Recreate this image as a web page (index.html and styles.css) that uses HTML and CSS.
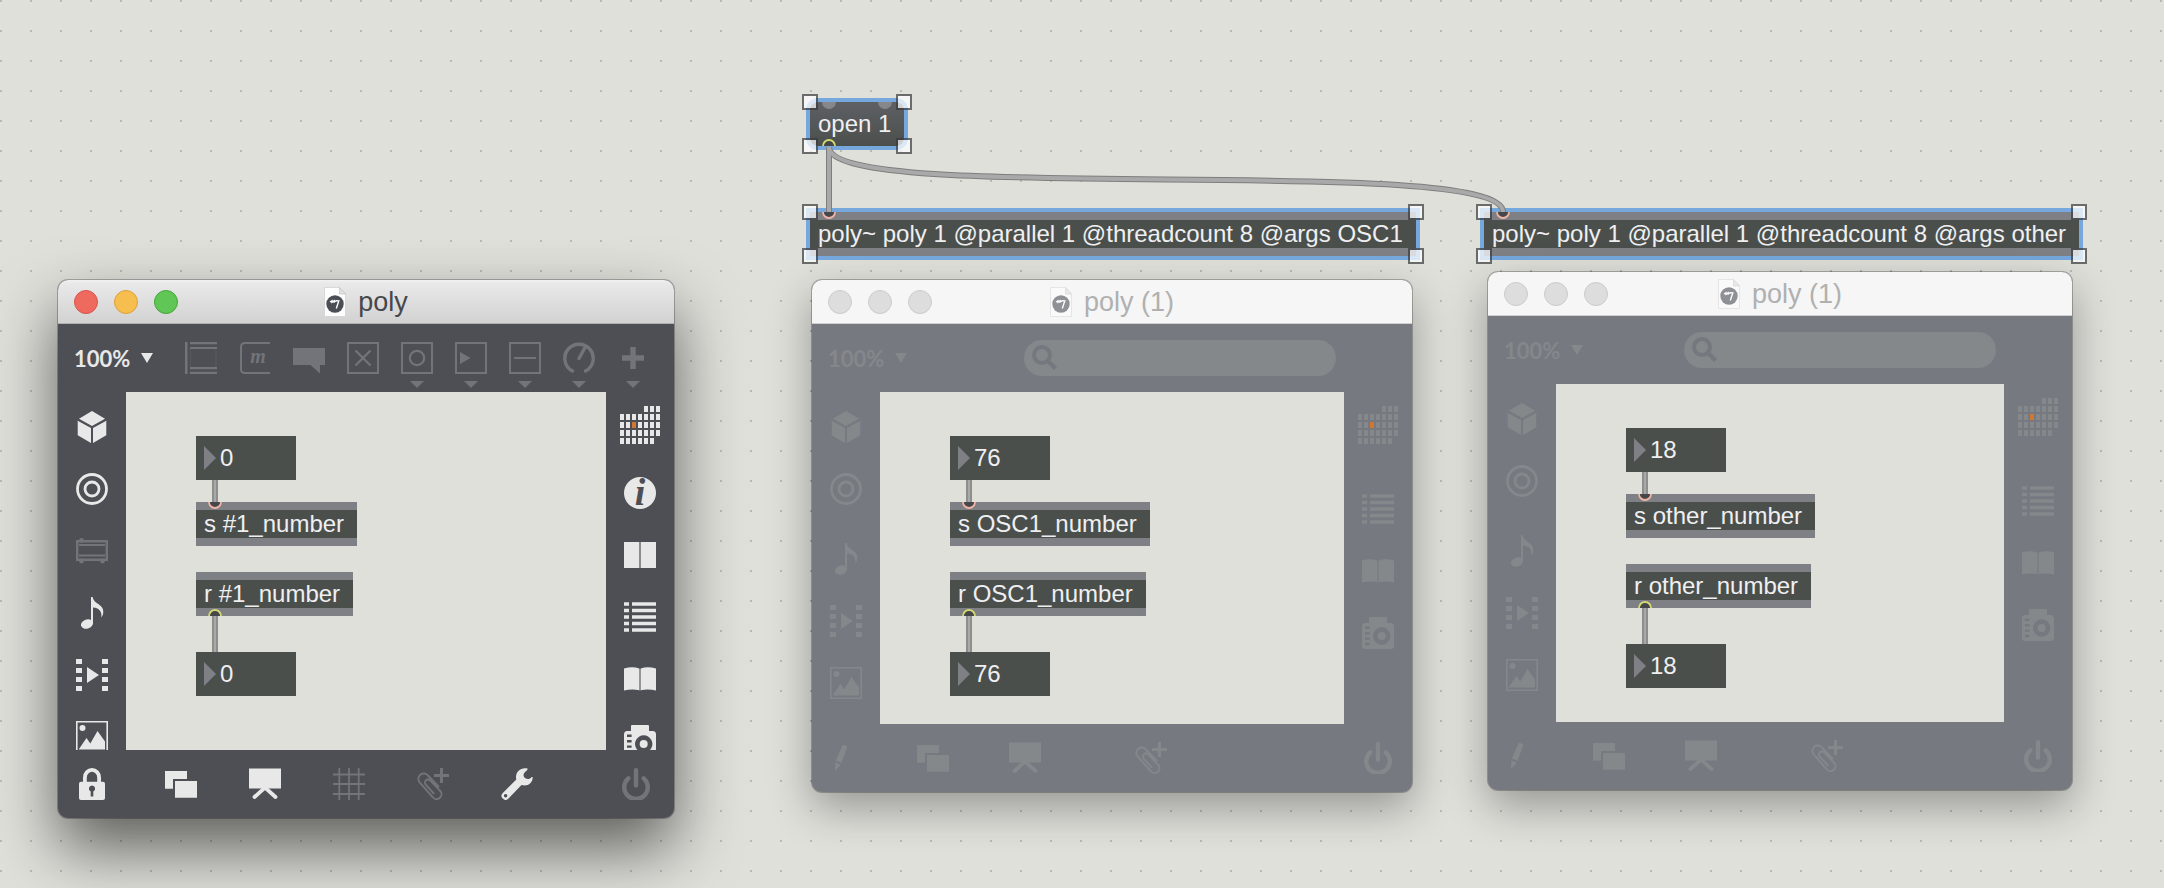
FILE: index.html
```html
<!DOCTYPE html>
<html lang="en">
<head>
<meta charset="utf-8">
<title>poly patcher</title>
<link rel="stylesheet" href="styles.css">
</head>
<body>
<svg class="sprite" aria-hidden="true">
  <symbol id="cube" viewBox="0 0 32 32"><path fill="currentColor" d="M16 0 29 7.7 16 15 3 7.7ZM1.7 9.7 15 17V32L1.7 24.3ZM17 17 30.3 9.7V24.3L17 32Z"/></symbol>
  <symbol id="target" viewBox="0 0 32 32"><g fill="none" stroke="currentColor" stroke-width="2.8"><circle cx="16" cy="16" r="14.5"/><circle cx="16" cy="16" r="7"/></g></symbol>
  <symbol id="rack" viewBox="0 0 32 32"><path fill="none" stroke="currentColor" stroke-width="2.4" d="M1.2 6.2H30.8V24.8H1.2Z"/><path stroke="currentColor" stroke-width="2" d="M3 10H29M3 20.5H29"/><g fill="currentColor"><circle cx="5.5" cy="5.4" r="2.4"/><circle cx="5.5" cy="26" r="2.4"/><circle cx="26.5" cy="26" r="2.4"/></g></symbol>
  <symbol id="note" viewBox="0 0 32 32"><g fill="currentColor"><path d="M15 0H16.6C17.5 7 27.3 7 27.3 14.5C27.3 17 26.5 19 25.3 20.5C26 15.5 24 11 17 10.6V27H15Z"/><ellipse cx="11" cy="27" rx="6.2" ry="4.6" transform="rotate(-20 11 27)"/></g></symbol>
  <symbol id="film" viewBox="0 0 32 32"><path fill="currentColor" d="M0 0h6v5H0zM0 9h6v5H0zM0 18h6v5H0zM0 27h6v5H0zM26 0h6v5h-6zM26 9h6v5h-6zM26 18h6v5h-6zM26 27h6v5h-6zM11 8 23 16 11 24Z"/></symbol>
  <symbol id="picture" viewBox="0 0 32 32"><path fill="none" stroke="currentColor" stroke-width="1.6" d="M.8.8H31.2V31.2H.8Z"/><g fill="currentColor"><circle cx="6.5" cy="7" r="3"/><path d="M3 28 10.5 17 14.3 22.5 21.5 10 29 20.5V28.5H3Z"/></g></symbol>
  <symbol id="lock" viewBox="0 0 32 32"><path fill="none" stroke="currentColor" stroke-width="3.8" d="M8.9 15V9.5a7.1 7.6 0 0 1 14.2 0V15"/><path fill="currentColor" fill-rule="evenodd" d="M5 13.7H27a2 2 0 0 1 2 2V30a2 2 0 0 1-2 2H5a2 2 0 0 1-2-2V15.7a2 2 0 0 1 2-2ZM16 17.4a3.2 3.2 0 0 0-1.3 6.1V28.5h2.6V23.5A3.2 3.2 0 0 0 16 17.4Z"/></symbol>
  <symbol id="copies" viewBox="0 0 32 32"><path fill="currentColor" d="M0 3H22V11H8V20.7H0ZM10 13H32V29.7H10Z"/></symbol>
  <symbol id="easel" viewBox="0 0 32 32"><path fill="currentColor" d="M0 .5H32V20.5H0Z"/><path fill="none" stroke="currentColor" stroke-width="3.8" stroke-linecap="round" d="M5.5 29 16 19.5 26.5 29"/></symbol>
  <symbol id="grid" viewBox="0 0 32 32"><path stroke="currentColor" stroke-width="1.8" d="M6.3 0V32M16 0V32M25.7 0V32M0 6.5H32M0 16H32M0 26H32"/></symbol>
  <symbol id="clip" viewBox="0 0 32 32"><path stroke="currentColor" stroke-width="3" d="M24.5 0V15M17 7.5H32"/><path fill="none" stroke="currentColor" stroke-width="1.9" stroke-linecap="round" d="M21.5 18.5 11 7.5A5.3 5.3 0 0 0 2.6 14.4L15.6 29A4.7 4.7 0 0 0 23.6 23.3L13.3 12.6A3 3 0 0 0 8.7 16.6L16.7 25.3"/></symbol>
  <symbol id="wrench" viewBox="0 0 32 32"><path fill="currentColor" fill-rule="evenodd" d="M26.5.6C20 -1.2 13.5 4 15.3 11.5L1.8 24.9A4 4 0 0 0 7.5 30.6L20.5 17C26.5 18.8 31.5 15.2 31.8 9.2L30.6 9C29 11.2 26.5 11.5 24.3 10.3 21.7 8.5 22.2 5.8 24.5 3.6 25.5 2.7 26.8 2.2 26.5.6ZM4.6 26a1.7 1.7 0 1 0 .01 0Z"/></symbol>
  <symbol id="power" viewBox="0 0 32 32"><path fill="none" stroke="currentColor" stroke-width="4.4" stroke-linecap="round" d="M16 2.2V17.5M8.3 10.3A11.8 11.8 0 1 0 23.7 10.3"/></symbol>
  <symbol id="pencil" viewBox="0 0 32 32"><path fill="currentColor" d="M17.5 3.6Q18 2.7 19 3L21.3 4Q22.4 4.5 22.1 5.5L16.5 20.8 10.8 18.5ZM10.4 20.5 15.7 22.8 10 29Z"/></symbol>
  <symbol id="object" viewBox="0 0 32 32"><path fill="currentColor" d="M0 0H2.5V32H0ZM5 0H32V2.2H5ZM5 5H32V7H5ZM5 25H32V27.2H5ZM5 29.8H32V32H5Z"/><path fill="none" stroke="currentColor" stroke-width=".6" opacity=".6" d="M5.3 7V25M31 7V25"/></symbol>
  <symbol id="comment" viewBox="0 0 32 32"><path fill="currentColor" d="M0 6H32V23H27V31.5L17.5 23H0Z"/></symbol>
  <symbol id="toggle" viewBox="0 0 32 32"><path fill="none" stroke="currentColor" stroke-width="2" d="M1 1H31V31H1Z"/><path stroke="currentColor" stroke-width="2.4" d="M8.5 8.5 23.5 23.5M23.5 8.5 8.5 23.5"/></symbol>
  <symbol id="button" viewBox="0 0 32 32"><path fill="none" stroke="currentColor" stroke-width="2" d="M1 1H31V31H1Z"/><circle cx="16" cy="16" r="7.2" fill="none" stroke="currentColor" stroke-width="2.2"/></symbol>
  <symbol id="number" viewBox="0 0 32 32"><path fill="none" stroke="currentColor" stroke-width="2" d="M1 1H31V31H1Z"/><path fill="currentColor" d="M5 10 15.5 16 5 22Z"/></symbol>
  <symbol id="slider" viewBox="0 0 32 32"><path fill="none" stroke="currentColor" stroke-width="2" d="M1 1H31V31H1Z"/><path stroke="currentColor" stroke-width="2.2" d="M5 16H27"/></symbol>
  <symbol id="dial" viewBox="0 0 32 32"><path fill="none" stroke="currentColor" stroke-width="3.4" stroke-linecap="round" d="M9.5 29A14.2 14.2 0 1 1 22.5 29M16 16.5 22 5.5"/></symbol>
  <symbol id="plus" viewBox="0 0 32 32"><path stroke="currentColor" stroke-width="5.4" d="M16 5V27M5 16H27"/></symbol>
  <symbol id="caret" viewBox="0 0 14 7"><path fill="currentColor" d="M0 0H14L7 7Z"/></symbol>
  <symbol id="zoom-caret" viewBox="0 0 12 10"><path fill="currentColor" d="M0 0H12L6 10Z"/></symbol>
  <symbol id="calendar" viewBox="0 0 40 38"><path fill="none" stroke="currentColor" stroke-width="6" stroke-dasharray="4 2" d="M24 3H40M0 11H40M0 19H40M0 27H40M0 35H34"/><path fill="#d07830" d="M12 16h4v6h-4z"/></symbol>
  <symbol id="panels" viewBox="0 0 32 32"><path fill="currentColor" d="M0 3H15V29H0ZM17 3H32V29H17Z"/><path fill="currentColor" opacity=".4" d="M15 3h2v26h-2z"/></symbol>
  <symbol id="list" viewBox="0 0 32 32"><path fill="none" stroke="currentColor" stroke-width="3.4" d="M0 3H5M8 3H32M0 9.5H5M8 9.5H32M0 16H5M8 16H32M0 22.5H5M8 22.5H32M0 29H5M8 29H32"/></symbol>
  <symbol id="book" viewBox="0 0 32 32"><path fill="currentColor" d="M0 5.6Q8 3.2 15.2 5.4V27.3Q8 25.6 0 27.6ZM16.8 5.4Q24 3.2 32 5.6V27.6Q24 25.6 16.8 27.3Z"/><path fill="currentColor" opacity=".4" d="M15.2 5.4h1.6v22h-1.6z"/></symbol>
  <symbol id="camera" viewBox="0 0 32 32"><path fill="currentColor" fill-rule="evenodd" d="M8 0H24Q25 0 25 1V6H29.5Q32 6.5 32 9V29Q32 32 29 32H3Q0 32 0 29V9Q0 6.5 2.5 6H7V1Q7 0 8 0ZM19.7 10.3a8.7 8.7 0 1 0 .01 0ZM3 9.6H7.6V12H3ZM3 15H7.6V17.4H3ZM3 20.4H7.6V22.8H3ZM3 25.8H7.6V28.2H3Z"/><circle cx="19.7" cy="19" r="4" fill="currentColor"/></symbol>
  <symbol id="search" viewBox="0 0 26 26"><circle cx="10" cy="10" r="8" fill="none" stroke="currentColor" stroke-width="4"/><path stroke="currentColor" stroke-width="4.5" d="M15.5 15.5 23.5 23.5"/></symbol>
  <symbol id="document" viewBox="0 0 22 30"><path fill="#fdfdfd" stroke="#d2d2d2" stroke-width=".8" d="M.5.5H15.5L21.5 7V29.5H.5Z"/><path fill="#e2e2e2" stroke="#bdbdbd" stroke-width=".6" d="M15.5.5V7H21.5Z"/><circle cx="11" cy="17" r="8.7" fill="#4b4e55"/><path fill="none" stroke="#fff" stroke-width="1.4" d="M6 15 8 13.8 8 15.2 10.2 13.8 10.2 15 12.3 13.6 14.8 13.8 12.3 21.5"/></symbol>
  <symbol id="inlet" viewBox="0 0 14 7"><path fill="#45474a" stroke="#f0b3a5" stroke-width="1.8" d="M1 -1V0A6 6 0 0 0 13 0V-1"/></symbol>
  <symbol id="outlet" viewBox="0 0 14 7"><path fill="#45474a" stroke="#d3d970" stroke-width="1.8" d="M1 8V7A6 6 0 0 1 13 7V8"/></symbol>
  <symbol id="message-inlet" viewBox="0 0 14 7"><path fill="#87878b" d="M0 0A7 7 0 0 0 14 0Z"/></symbol>
</svg>

<main class="desktop">
  <div class="node message-box selected at-open">open 1
    <svg class="port top"><use href="#message-inlet"/></svg>
    <svg class="port top second"><use href="#message-inlet"/></svg>
    <svg class="port bottom"><use href="#outlet"/></svg>
    <i class="handle nw"></i><i class="handle ne"></i><i class="handle sw"></i><i class="handle se"></i>
  </div>
  <div class="node object-box selected at-osc">poly~ poly 1 @parallel 1 @threadcount 8 @args OSC1
    <svg class="port top"><use href="#inlet"/></svg>
    <i class="handle nw"></i><i class="handle ne"></i><i class="handle sw"></i><i class="handle se"></i>
  </div>
  <div class="node object-box selected at-other">poly~ poly 1 @parallel 1 @threadcount 8 @args other
    <svg class="port top"><use href="#inlet"/></svg>
    <i class="handle nw"></i><i class="handle ne"></i><i class="handle sw"></i><i class="handle se"></i>
  </div>
  <svg class="cords" aria-hidden="true">
    <g class="cord-edge"><path d="M829 147V212"/><path d="M829 147C829 207 1503 152 1503 212"/></g>
    <g class="cord-core"><path d="M829 147V212"/><path d="M829 147C829 207 1503 152 1503 212"/></g>
  </svg>

  <section class="window active win-main">
    <header class="titlebar">
      <div class="lights"><button class="light close" aria-label="Close"></button><button class="light minimise" aria-label="Minimise"></button><button class="light expand" aria-label="Expand"></button></div>
      <h1 class="title"><svg class="doc"><use href="#document"/></svg>poly</h1>
    </header>
    <div class="toolbar">
      <label class="zoom"><select aria-label="Zoom"><option>100%</option></select><svg class="zoom-caret"><use href="#zoom-caret"/></svg></label>
      <div class="tools">
        <button class="tool" aria-label="Object"><svg class="icon"><use href="#object"/></svg></button>
        <button class="tool" aria-label="Message"><svg class="icon" viewBox="0 0 32 32"><path fill="none" stroke="currentColor" stroke-width="2" d="M31 1H6Q2 1 2 5V27Q2 31 6 31H31"/><text class="glyph-m" x="19" y="21">m</text></svg></button>
        <button class="tool" aria-label="Comment"><svg class="icon"><use href="#comment"/></svg></button>
        <button class="tool" aria-label="Toggle"><svg class="icon"><use href="#toggle"/></svg></button>
        <button class="tool" aria-label="Button"><svg class="icon"><use href="#button"/></svg><svg class="caret"><use href="#caret"/></svg></button>
        <button class="tool" aria-label="Number"><svg class="icon"><use href="#number"/></svg><svg class="caret"><use href="#caret"/></svg></button>
        <button class="tool" aria-label="Slider"><svg class="icon"><use href="#slider"/></svg><svg class="caret"><use href="#caret"/></svg></button>
        <button class="tool" aria-label="Dial"><svg class="icon"><use href="#dial"/></svg><svg class="caret"><use href="#caret"/></svg></button>
        <button class="tool" aria-label="Add"><svg class="icon"><use href="#plus"/></svg><svg class="caret"><use href="#caret"/></svg></button>
      </div>
    </div>
    <nav class="rail left">
      <button class="tool" aria-label="Packages"><svg class="icon"><use href="#cube"/></svg></button>
      <button class="tool" aria-label="Target"><svg class="icon"><use href="#target"/></svg></button>
      <button class="tool dim" aria-label="Rack"><svg class="icon"><use href="#rack"/></svg></button>
      <button class="tool" aria-label="Audio"><svg class="icon"><use href="#note"/></svg></button>
      <button class="tool" aria-label="Video"><svg class="icon"><use href="#film"/></svg></button>
      <button class="tool" aria-label="Images"><svg class="icon"><use href="#picture"/></svg></button>
    </nav>
    <div class="canvas">
      <label class="node number-box row-1"><input aria-label="Number in" value="0"></label>
      <div class="node object-box row-2">s #1_number<svg class="port top"><use href="#inlet"/></svg></div>
      <div class="node object-box row-3">r #1_number<svg class="port bottom"><use href="#outlet"/></svg></div>
      <label class="node number-box row-4"><input aria-label="Number out" value="0"></label>
      <i class="cord cord-1"></i><i class="cord cord-2"></i>
    </div>
    <nav class="rail right">
      <button class="tool" aria-label="Calendar"><svg class="icon-wide"><use href="#calendar"/></svg></button>
      <button class="tool" aria-label="Info"><svg class="icon" viewBox="0 0 32 32"><circle cx="16" cy="16" r="16" fill="currentColor"/><text class="glyph-i" x="16" y="28">i</text></svg></button>
      <button class="tool" aria-label="Panels"><svg class="icon"><use href="#panels"/></svg></button>
      <button class="tool" aria-label="List"><svg class="icon"><use href="#list"/></svg></button>
      <button class="tool" aria-label="Reference"><svg class="icon"><use href="#book"/></svg></button>
      <button class="tool" aria-label="Snapshots"><svg class="icon"><use href="#camera"/></svg></button>
    </nav>
    <footer class="bottombar">
      <button class="tool" aria-label="Lock"><svg class="icon"><use href="#lock"/></svg></button>
      <div class="actions">
        <button class="tool" aria-label="New view"><svg class="icon"><use href="#copies"/></svg></button>
        <button class="tool" aria-label="Presentation"><svg class="icon"><use href="#easel"/></svg></button>
        <button class="tool dim" aria-label="Grid"><svg class="icon"><use href="#grid"/></svg></button>
        <button class="tool dim" aria-label="Attach"><svg class="icon"><use href="#clip"/></svg></button>
        <button class="tool" aria-label="Settings"><svg class="icon"><use href="#wrench"/></svg></button>
      </div>
      <button class="tool dim power" aria-label="Power"><svg class="icon"><use href="#power"/></svg></button>
    </footer>
  </section>

  <section class="window inactive win-osc">
    <header class="titlebar">
      <div class="lights"><button class="light" aria-label="Close"></button><button class="light" aria-label="Minimise"></button><button class="light" aria-label="Expand"></button></div>
      <h1 class="title"><svg class="doc"><use href="#document"/></svg>poly (1)</h1>
    </header>
    <div class="toolbar">
      <label class="zoom"><select aria-label="Zoom"><option>100%</option></select><svg class="zoom-caret"><use href="#zoom-caret"/></svg></label>
      <label class="search"><svg class="search-icon"><use href="#search"/></svg><input type="search" aria-label="Search"></label>
    </div>
    <nav class="rail left">
      <button class="tool" aria-label="Packages"><svg class="icon"><use href="#cube"/></svg></button>
      <button class="tool" aria-label="Target"><svg class="icon"><use href="#target"/></svg></button>
      <button class="tool group" aria-label="Audio"><svg class="icon"><use href="#note"/></svg></button>
      <button class="tool" aria-label="Video"><svg class="icon"><use href="#film"/></svg></button>
      <button class="tool" aria-label="Images"><svg class="icon"><use href="#picture"/></svg></button>
    </nav>
    <div class="canvas">
      <label class="node number-box row-1"><input aria-label="Number in" value="76"></label>
      <div class="node object-box row-2">s OSC1_number<svg class="port top"><use href="#inlet"/></svg></div>
      <div class="node object-box row-3">r OSC1_number<svg class="port bottom"><use href="#outlet"/></svg></div>
      <label class="node number-box row-4"><input aria-label="Number out" value="76"></label>
      <i class="cord cord-1"></i><i class="cord cord-2"></i>
    </div>
    <nav class="rail right">
      <button class="tool" aria-label="Calendar"><svg class="icon-wide"><use href="#calendar"/></svg></button>
      <button class="tool" aria-label="List"><svg class="icon"><use href="#list"/></svg></button>
      <button class="tool" aria-label="Reference"><svg class="icon"><use href="#book"/></svg></button>
      <button class="tool" aria-label="Snapshots"><svg class="icon"><use href="#camera"/></svg></button>
    </nav>
    <footer class="bottombar">
      <button class="tool" aria-label="Edit"><svg class="icon"><use href="#pencil"/></svg></button>
      <div class="actions">
        <button class="tool" aria-label="New view"><svg class="icon"><use href="#copies"/></svg></button>
        <button class="tool" aria-label="Presentation"><svg class="icon"><use href="#easel"/></svg></button>
        <button class="tool attach" aria-label="Attach"><svg class="icon"><use href="#clip"/></svg></button>
      </div>
      <button class="tool power" aria-label="Power"><svg class="icon"><use href="#power"/></svg></button>
    </footer>
  </section>

  <section class="window inactive win-other">
    <header class="titlebar">
      <div class="lights"><button class="light" aria-label="Close"></button><button class="light" aria-label="Minimise"></button><button class="light" aria-label="Expand"></button></div>
      <h1 class="title"><svg class="doc"><use href="#document"/></svg>poly (1)</h1>
    </header>
    <div class="toolbar">
      <label class="zoom"><select aria-label="Zoom"><option>100%</option></select><svg class="zoom-caret"><use href="#zoom-caret"/></svg></label>
      <label class="search"><svg class="search-icon"><use href="#search"/></svg><input type="search" aria-label="Search"></label>
    </div>
    <nav class="rail left">
      <button class="tool" aria-label="Packages"><svg class="icon"><use href="#cube"/></svg></button>
      <button class="tool" aria-label="Target"><svg class="icon"><use href="#target"/></svg></button>
      <button class="tool group" aria-label="Audio"><svg class="icon"><use href="#note"/></svg></button>
      <button class="tool" aria-label="Video"><svg class="icon"><use href="#film"/></svg></button>
      <button class="tool" aria-label="Images"><svg class="icon"><use href="#picture"/></svg></button>
    </nav>
    <div class="canvas">
      <label class="node number-box row-1"><input aria-label="Number in" value="18"></label>
      <div class="node object-box row-2">s other_number<svg class="port top"><use href="#inlet"/></svg></div>
      <div class="node object-box row-3">r other_number<svg class="port bottom"><use href="#outlet"/></svg></div>
      <label class="node number-box row-4"><input aria-label="Number out" value="18"></label>
      <i class="cord cord-1"></i><i class="cord cord-2"></i>
    </div>
    <nav class="rail right">
      <button class="tool" aria-label="Calendar"><svg class="icon-wide"><use href="#calendar"/></svg></button>
      <button class="tool" aria-label="List"><svg class="icon"><use href="#list"/></svg></button>
      <button class="tool" aria-label="Reference"><svg class="icon"><use href="#book"/></svg></button>
      <button class="tool" aria-label="Snapshots"><svg class="icon"><use href="#camera"/></svg></button>
    </nav>
    <footer class="bottombar">
      <button class="tool" aria-label="Edit"><svg class="icon"><use href="#pencil"/></svg></button>
      <div class="actions">
        <button class="tool" aria-label="New view"><svg class="icon"><use href="#copies"/></svg></button>
        <button class="tool" aria-label="Presentation"><svg class="icon"><use href="#easel"/></svg></button>
        <button class="tool attach" aria-label="Attach"><svg class="icon"><use href="#clip"/></svg></button>
      </div>
      <button class="tool power" aria-label="Power"><svg class="icon"><use href="#power"/></svg></button>
    </footer>
  </section>
</main>
</body>
</html>
```
FILE: styles.css
```css
* { box-sizing: border-box; }

body {
  margin: 0;
  font-family: "Liberation Sans", Arial, sans-serif;
}

button, input, select {
  appearance: none;
  margin: 0;
  padding: 0;
  border: 0;
  background: none;
  color: inherit;
  font: inherit;
}

svg { display: block; }

.sprite { position: absolute; width: 0; height: 0; }

.desktop {
  position: relative;
  min-height: 100vh;
  overflow: hidden;
  background:
    conic-gradient(from 270deg at 2px 2px, #b9bab4 90deg, transparent 90deg) 0 0 / 30px 30px,
    #dfe0da;
}

/* Patcher objects */
.node {
  position: absolute;
  height: 44px;
  color: #efeff2;
  font-size: 24px;
  line-height: 43px;
  white-space: nowrap;
}

.object-box {
  padding: 0 13px 0 8px;
  background: linear-gradient(#7f8085 8px, #4b4f4c 8px 36px, #7f8085 36px);
}

.message-box {
  padding: 0 13px 0 8px;
  border-radius: 8px;
  background: linear-gradient(#5e6064, #4b4f4c);
}

.selected { box-shadow: 0 0 0 4px #76a8de; }

.at-open { left: 810px; top: 102px; }
.at-osc { left: 810px; top: 212px; }
.at-other { left: 1484px; top: 212px; }

.port { position: absolute; left: 12px; width: 14px; height: 7px; }
.port.top { top: 0; }
.port.bottom { bottom: 0; }
.port.second { left: auto; right: 12px; }

.handle {
  position: absolute;
  width: 16px;
  height: 16px;
  border: 2px solid rgba(55, 57, 60, .7);
  background: linear-gradient(rgba(255, 255, 255, .72), rgba(255, 255, 255, .72)) padding-box;
}
.nw { left: -8px; top: -8px; }
.ne { right: -8px; top: -8px; }
.sw { left: -8px; bottom: -8px; }
.se { right: -8px; bottom: -8px; }

.cords { position: absolute; inset: 0; width: 100%; height: 100%; }
.cord-edge { fill: none; stroke: #7e7e7e; stroke-width: 6; }
.cord-core { fill: none; stroke: #a9a9a9; stroke-width: 4; }

.cord {
  position: absolute;
  left: 86px;
  width: 6px;
  background: linear-gradient(90deg, #8e8e8e 2px, #a9a9a9 2px 4px, #8e8e8e 4px);
}
.cord-1 { top: 88px; height: 22px; }
.cord-2 { top: 224px; height: 36px; }

.canvas .node { left: 70px; }
.row-1 { top: 44px; }
.row-2 { top: 110px; }
.row-3 { top: 180px; }
.row-4 { top: 260px; }

.number-box {
  display: flex;
  align-items: center;
  gap: 4px;
  width: 100px;
  padding-left: 8px;
  background: #4b4f4c;
}
.number-box::before {
  content: "";
  flex: none;
  border: 12px solid transparent;
  border-right: 0;
  border-left-color: #7f8085;
}
.number-box input { flex: 1; min-width: 0; height: 42px; margin-bottom: 2px; }

/* Windows */
.window {
  position: absolute;
  display: grid;
  grid-template: 44px 68px 1fr 68px / 68px 1fr 68px;
  overflow: hidden;
  border-radius: 10px;
  background: var(--chrome);
  color: var(--icon);
}
.active {
  --chrome: #4d4f54;
  --icon: #e8e8e8;
  --dim: #727479;
  --actions-start: 57px;
  --actions-gap: 52px;
  box-shadow: 0 0 0 1px rgba(0, 0, 0, .25), 0 30px 64px rgba(0, 0, 0, .58);
}
.inactive {
  --chrome: #777981;
  --icon: #84888b;
  --dim: #84888b;
  --actions-start: 60px;
  --actions-gap: 60px;
  box-shadow: 0 0 0 1px rgba(0, 0, 0, .25), 0 16px 44px rgba(0, 0, 0, .33);
}
.win-main { left: 58px; top: 280px; width: 616px; height: 538px; }
.win-osc { left: 812px; top: 280px; width: 600px; height: 512px; }
.win-other { left: 1488px; top: 272px; width: 584px; height: 518px; }

.titlebar {
  grid-column: 1 / -1;
  display: grid;
  grid-template-columns: 1fr auto 1fr;
  align-items: center;
  padding: 0 16px;
  border-bottom: 1px solid #b0b0b0;
  background: linear-gradient(#f2f2f2, #e9e9e9 3px, #d2d2d2);
}
.inactive .titlebar { border-color: #cfcfcf; background: #f6f6f6; }

.lights { display: flex; gap: 16px; }
.light {
  width: 24px;
  height: 24px;
  border: 1px solid #cbcbcb;
  border-radius: 50%;
  background: #dddddd;
}
.close { border-color: #d9534c; background: #ee6a5f; }
.minimise { border-color: #dba038; background: #f6be4f; }
.expand { border-color: #48a53c; background: #60c655; }

.title {
  display: flex;
  align-items: center;
  gap: 12px;
  margin: 0;
  color: #47484a;
  font-size: 27px;
  font-weight: 400;
  line-height: 30px;
}
.inactive .title { color: #b0b0b0; }
.doc { width: 22px; height: 30px; }
.inactive .doc { opacity: .6; }

.toolbar {
  grid-column: 1 / -1;
  display: flex;
  align-items: flex-start;
  justify-content: space-between;
  padding: 16px 25px 0 16px;
}
.inactive .toolbar { padding-right: 76px; }

.zoom {
  display: flex;
  align-items: center;
  gap: 10px;
  height: 36px;
  font-family: Lato, sans-serif;
  font-size: 22px;
  font-weight: 700;
}
.zoom-caret { width: 12px; height: 10px; }

.tools { display: flex; gap: 22px; padding-top: 2px; color: var(--dim); }
.tool { display: grid; flex: none; justify-items: center; align-content: start; gap: 7px; }
.dim { color: var(--dim); }
.icon { width: 32px; height: 32px; }
.icon-wide { width: 40px; height: 38px; }
.caret { width: 14px; height: 7px; }

.glyph-m {
  fill: currentColor;
  font: italic 700 20px "Liberation Serif", serif;
  text-anchor: middle;
}
.glyph-i {
  fill: var(--chrome);
  font: italic 700 38px "Liberation Serif", serif;
  text-anchor: middle;
}

.search {
  display: flex;
  align-items: center;
  gap: 8px;
  width: 312px;
  height: 36px;
  padding: 0 8px;
  border-radius: 18px;
  background: var(--icon);
}
.search-icon { flex: none; width: 26px; height: 26px; color: #75787e; }
.search input { flex: 1; min-width: 0; }

.rail {
  display: flex;
  flex-direction: column;
  align-items: center;
  gap: 30px;
  min-height: 0;
  overflow: hidden;
}
.rail.left { padding-top: 19px; }
.rail.right { padding-top: 14px; }
.rail .group { margin-top: 8px; }
.active .icon-wide { margin-bottom: 3px; }
.inactive .icon-wide { margin-bottom: 19px; }

.canvas {
  position: relative;
  min-width: 0;
  overflow: hidden;
  background: #dfe0da;
}

.bottombar {
  grid-column: 1 / -1;
  display: flex;
  align-items: center;
  padding: 0 22px 0 18px;
}
.inactive .bottombar { padding: 0 18px 0 13px; }
.actions {
  display: flex;
  gap: var(--actions-gap);
  margin-left: var(--actions-start);
}
.actions .attach { margin-left: 34px; }
.power { margin-left: auto; }
```
